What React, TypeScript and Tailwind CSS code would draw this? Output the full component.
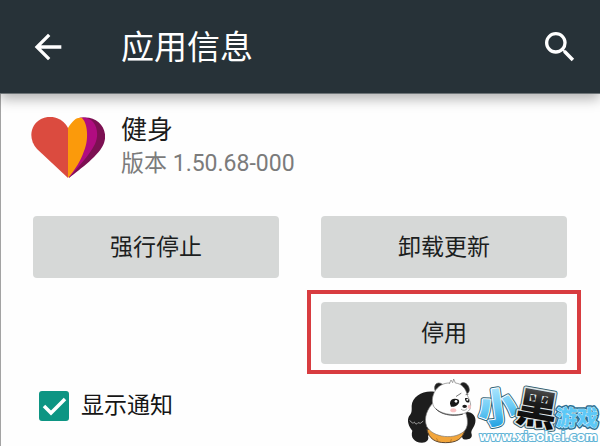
import React, { useState } from 'react';
import { MdArrowBack, MdSearch } from 'react-icons/md';

interface ActionButtonProps {
  label: string;
  highlighted?: boolean;
}

function ActionButton({ label, highlighted }: ActionButtonProps) {
  return (
    <div className="relative">
      <button
        type="button"
        className="block h-[62px] w-full rounded bg-[#d6d8d7] pt-0.5 text-[23px] leading-8 text-[#1c1e1e]"
      >
        {label}
      </button>
      {highlighted && (
        <span className="pointer-events-none absolute -inset-x-3.5 -top-3 -bottom-2.5 border-4 border-[#d83c40]" />
      )}
    </div>
  );
}

function HeartIcon() {
  return (
    <svg viewBox="0 0 74 62" className="h-[62px] w-[74px]" aria-hidden="true">
      <path
        d="M50 1C66-2 78 12 73 26C69 38 49 52 38 61Z"
        fill="#7c1052"
      />
      <path d="M48 1C63-2 70 13 64 27C58 39 46 51 38 61Z" fill="#b00c80" />
      <path d="M37 11C42 3 46 0 51 1C58 8 57 26 53 34C50 43 44 53 37 61Z" fill="#fb9a0b" />
      <path
        d="M37 61L6 32C-3 22-1 8 10 2C20-3 32 1 37 11Z"
        fill="#db4b3f"
      />
    </svg>
  );
}

function SiteLogo() {
  return (
    <svg
      viewBox="0 0 200 80"
      className="pointer-events-none absolute right-0 bottom-0 h-20 w-[200px]"
      role="img"
      aria-label="小黑游戏"
    >
      <defs>
        <linearGradient id="sky" x1="0" y1="0" x2="0" y2="1">
          <stop offset="0.1" stopColor="#b9ebff" />
          <stop offset="0.55" stopColor="#6ccbf5" />
          <stop offset="0.9" stopColor="#1f9fe0" />
        </linearGradient>
        <linearGradient id="ink" x1="0" y1="0" x2="0" y2="1">
          <stop offset="0.1" stopColor="#666" />
          <stop offset="0.45" stopColor="#1c1c1c" />
          <stop offset="1" stopColor="#000" />
        </linearGradient>
      </defs>

      {/* panda */}
      <g transform="scale(0.3333)" strokeLinecap="round" strokeLinejoin="round">
        <path
          d="M103 77C70 72 37 90 35 119C35 132 37 140 27 151C20 164 26 182 37 194C31 214 42 229 66 230C80 230 88 222 84 210L101 190Z"
          fill="#1d1d1d"
        />
        <path
          d="M194 139C213 134 230 149 226 169C224 184 210 193 215 205C218 217 205 224 189 219L174 188Z"
          fill="#1d1d1d"
        />
        <path d="M81 191C87 219 106 230 136 230C167 230 188 221 195 191Z" fill="#f2a53b" stroke="#5b4630" strokeWidth="3" />
        <path d="M110 218L116 228M154 220L151 229" stroke="#a86b20" strokeWidth="2" />
        <path
          d="M101 108C82 129 70 155 80 181C98 216 168 223 195 193C207 176 203 155 194 132Z"
          fill="#fff"
          stroke="#777"
          strokeWidth="2"
        />
        <path d="M30 164Q38 176 43 168Q48 179 54 170Q61 176 69 166" fill="none" stroke="#999" strokeWidth="3" />
        <path
          d="M106 76C97 51 118 43 132 59Z M180 57C186 41 208 53 208 72C207 82 199 86 193 82Z"
          fill="#1d1d1d"
          stroke="#555"
          strokeWidth="2"
        />
        <path
          d="M149 51L153 42L158 50L161 39L166 51C187 53 197 69 201 84C205 98 215 109 211 126C207 139 191 145 169 146C139 147 110 137 101 121C88 96 108 49 149 51Z"
          fill="#fff"
          stroke="#777"
          strokeWidth="2"
        />
        <path d="M108 129C121 144 153 153 187 145" fill="none" stroke="#444" strokeWidth="3" />
        <path d="M150 113C150 98 166 96 176 101C183 112 166 125 153 122Z" fill="#171717" />
        <path d="M195 97C205 92 210 102 207 109C201 112 194 106 195 97Z" fill="#171717" />
        <circle cx="168" cy="106" r="4" fill="#fff" />
        <circle cx="202" cy="101" r="3" fill="#fff" />
        <path d="M169 91L183 82M198 86L204 85" stroke="#777" strokeWidth="3" />
        <ellipse cx="194" cy="121" rx="7" ry="5" fill="#1b1b1b" />
        <path d="M184 130Q193 138 201 128" fill="none" stroke="#777" strokeWidth="2" />
        <ellipse cx="160" cy="133" rx="9" ry="6" fill="#f9c2c4" />
        <ellipse cx="208" cy="122" rx="5" ry="6" fill="#f9c2c4" />
      </g>

      {/* lettering: dark rim first, then the filled glyphs */}
      <g
        fontFamily="'Noto Sans CJK SC', sans-serif"
        fontWeight="900"
        strokeLinejoin="round"
        paintOrder="stroke"
      >
        <g fontSize="39" transform="rotate(-8 97 42)">
          <text x="78" y="56" fill="#2d6478" stroke="#2d6478" strokeWidth="5">小</text>
          <text x="78" y="56" fill="#fff" stroke="#fff" strokeWidth="3">小</text>
          <text x="78" y="56" fill="url(#sky)" stroke="url(#sky)" strokeWidth="1">小</text>
        </g>
        <g fontSize="41" transform="rotate(10 137 41)">
          <text x="117" y="58" fill="#3c6270" stroke="#3c6270" strokeWidth="5">黑</text>
          <text x="117" y="58" fill="#dfe8eb" stroke="#dfe8eb" strokeWidth="3">黑</text>
          <text x="117" y="58" fill="url(#ink)">黑</text>
        </g>
        <g fontSize="21">
          <text x="156" y="59" fill="#2d6f92" stroke="#2d6f92" strokeWidth="4">游戏</text>
          <text x="156" y="59" fill="#5cc8f7" stroke="#d9f4ff" strokeWidth="1">游戏</text>
        </g>
      </g>
      <text
        x="79"
        y="75"
        fontFamily="'DejaVu Sans', sans-serif"
        fontSize="12"
        fontWeight="700"
        fill="#fff"
        stroke="#62b4d6"
        strokeWidth="2"
        strokeLinejoin="round"
        paintOrder="stroke"
      >
        www.xiaohei.com
      </text>
    </svg>
  );
}

function App() {
  const [notify, setNotify] = useState(true);

  return (
    <div className="relative flex min-h-screen flex-col overflow-hidden bg-[#fefefe] font-[Roboto,'Noto_Sans_CJK_SC',sans-serif]">
      <header className="z-10 flex h-[94px] items-center border-b border-[#6d7477] bg-[#273238] pr-5 pl-7 text-white shadow-[0_5px_12px_rgba(0,0,0,0.3)]">
        <button type="button" aria-label="返回">
          <MdArrowBack className="size-10" />
        </button>
        <h1 className="ml-[53px] flex-1 pt-0.5 text-[33px] leading-10">应用信息</h1>
        <button type="button" aria-label="搜索">
          <MdSearch className="size-10" />
        </button>
      </header>

      <main className="flex-1 border-l border-[#a3a3a3] pt-5 pr-[33px] pl-8">
        <section className="-ml-0.5 flex items-center gap-4">
          <HeartIcon />
          <div>
            <h2 className="text-[26px] leading-8 text-[#1c1c1c]">健身</h2>
            <p className="text-[23px] leading-9 text-[#7b7b7b]">版本 1.50.68-000</p>
          </div>
        </section>

        <section className="mt-[34px] grid grid-cols-2 gap-x-[42px] gap-y-6">
          <ActionButton label="强行停止" />
          <ActionButton label="卸载更新" />
          <div className="col-start-2">
            <ActionButton label="停用" highlighted />
          </div>
        </section>

        <label className="mt-6 ml-1.5 flex w-fit items-center gap-3 text-[23px] leading-9 text-[#151515]">
          <span className="relative size-[30px]">
            <input
              type="checkbox"
              checked={notify}
              onChange={(e) => setNotify(e.target.checked)}
              className="peer block size-full appearance-none rounded-[3px] border-2 border-[#757575] checked:border-[#0d9583] checked:bg-[#0d9583]"
            />
            <svg
              viewBox="0 0 30 30"
              className="pointer-events-none absolute inset-0 hidden peer-checked:block"
              aria-hidden="true"
            >
              <path d="M5 15L12 22L26 8" fill="none" stroke="#fff" strokeWidth="3.5" />
            </svg>
          </span>
          显示通知
        </label>
      </main>

      <SiteLogo />
    </div>
  );
}

export default App;
